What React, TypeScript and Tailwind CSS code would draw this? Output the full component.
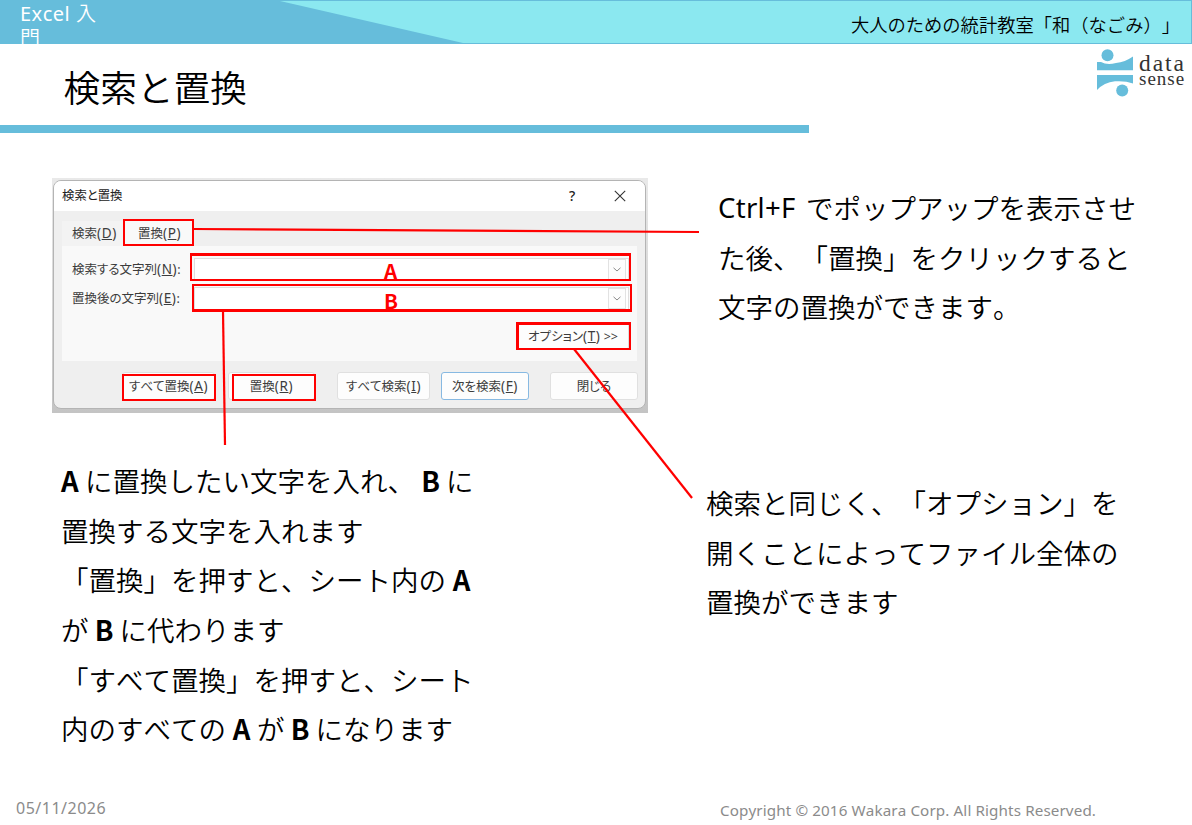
import type { ReactNode } from 'react';

const CJK = "font-['Noto_Sans_CJK_JP',sans-serif] [text-spacing-trim:space-all] [font-kerning:none]";

interface ChildrenProps {
  children: ReactNode;
  className?: string;
}

function Line({ children }: ChildrenProps) {
  return <p className="h-[49.6px] flex items-center whitespace-pre">{children}</p>;
}

function Key({ children, className = 'w-[31px] text-center' }: ChildrenProps) {
  return <b className={`inline-block font-bold ${className}`}>{children}</b>;
}

// Keyboard shortcut hint such as (D)
function Mnemonic({ letter }: { letter: string }) {
  return <span className="text-[13.5px] tracking-[0.6px]">(<u>{letter}</u>)</span>;
}

function Logo() {
  return (
    <div className="flex items-start w-[90px] h-[50px] mt-[4px]">
      <svg width="38" height="50" viewBox="0 0 38 50" fill="#66bddb">
        <circle cx="10.5" cy="7.2" r="6" />
        <path d="M0 14H4Q10 17.5 19 15Q28 14 36 8.5V22.3H0Z" />
        <path d="M0 27H36V35.5Q28 32.5 18 33.3Q7 34.5 0 42Z" />
        <circle cx="25.2" cy="42.5" r="6" />
      </svg>
      <div className="ml-1 font-['Liberation_Serif',serif] text-[#333]">
        <div className="text-[23.5px] leading-[22px] tracking-[1.9px] mt-[4px]">data</div>
        <div className="text-[19px] leading-[14px] tracking-[1px] -mt-[2px]">sense</div>
      </div>
    </div>
  );
}

function DialogButton({ children, className = '' }: ChildrenProps) {
  return (
    <div className={`h-[28px] shrink-0 flex items-center justify-center rounded-[3px] border bg-[#fdfdfd] whitespace-pre ${className}`}>
      <span>{children}</span>
    </div>
  );
}

function ComboBox() {
  return (
    <div className="w-[435px] h-[23px] flex justify-end items-center bg-white border border-[#dedede] pr-[2px]">
      <div className="w-[18px] h-[21px] flex items-center justify-center border border-[#e2e2e2] bg-[#fdfdfd]">
        <svg width="8" height="5" viewBox="0 0 8 5" fill="none" stroke="#8a8a8a">
          <path d="M0.5 0.8L4 4L7.5 0.8" />
        </svg>
      </div>
    </div>
  );
}

function ReplaceDialog() {
  return (
    <div className="w-[596px] h-[235px] p-[2px] pl-px bg-linear-to-b from-[#e9e9e9] to-[#c4c4c4] font-['Noto_Sans','Noto_Sans_CJK_JP',sans-serif] font-normal text-[12.5px] leading-none text-[#3c3c3c] [font-feature-settings:'palt']">
      <div className="w-[593px] h-[229px] rounded-[8px] border border-[#b4b4b4] bg-[#efefef] overflow-hidden">
        <div className="h-[30px] flex items-center bg-white pl-2 text-[#222]">
          <span className="w-[507px] text-[12.4px]">検索と置換</span>
          <span className="w-[45px] text-[14px] font-medium">?</span>
          <svg width="12" height="12" viewBox="0 0 12 12" stroke="#333" strokeWidth="1.1">
            <path d="M0.8 0.8L11.2 11.2M11.2 0.8L0.8 11.2" />
          </svg>
        </div>
        <div className="ml-[8px] mt-[10px] flex h-[25px] items-center">
          <div className="w-[62px] h-full flex items-center bg-[#f3f3f3] pl-[10px]">
            <span>検索<Mnemonic letter="D" /></span>
          </div>
          <div className="w-[70px] h-full flex items-center bg-[#f9f9f9] pl-[14px]">
            <span>置換<Mnemonic letter="P" /></span>
          </div>
        </div>
        <div className="ml-[8px] w-[575px] h-[115px] bg-[#f9f9f9] pt-[12px] pl-[10px]">
          <div className="flex items-center h-[23px]">
            <span className="w-[122px] whitespace-nowrap">検索する文字列<Mnemonic letter="N" />:</span>
            <ComboBox />
          </div>
          <div className="mt-[6px] flex items-center h-[23px]">
            <span className="w-[122px] whitespace-nowrap">置換後の文字列<Mnemonic letter="E" />:</span>
            <ComboBox />
          </div>
          <DialogButton className="mt-[12px] ml-[445px] w-[112px] pt-[2px] border-[#dddddd]">
            オプション<Mnemonic letter="T" /> &gt;&gt;
          </DialogButton>
        </div>
        <div className="mt-[11px] ml-[68px] flex">
          <DialogButton className="w-[93px] pt-[2px] border-[#e0e0e0]">すべて置換<Mnemonic letter="A" /></DialogButton>
          <DialogButton className="ml-[13px] w-[87px] pt-[2px] border-[#e0e0e0]">置換<Mnemonic letter="R" /></DialogButton>
          <DialogButton className="ml-[22px] w-[93px] pt-[2px] border-[#e0e0e0]">すべて検索<Mnemonic letter="I" /></DialogButton>
          <DialogButton className="ml-[11px] w-[88px] pt-[2px] border-[#87b9e2]">次を検索<Mnemonic letter="F" /></DialogButton>
          <DialogButton className="ml-[21px] w-[88px] pt-[2px] border-[#e0e0e0]">閉じる</DialogButton>
        </div>
      </div>
    </div>
  );
}

// Red callouts drawn over the dialog
function Annotations() {
  return (
    <>
      <div className="absolute left-[123px] top-[219px] w-[71px] h-[27px] border-2 border-[#ff0000]" />
      <div className="absolute left-[190px] top-[253px] w-[441px] h-[28px] border-2 border-t-[3px] border-[#ff0000]" />
      <div className="absolute left-[192px] top-[284px] w-[440px] h-[28px] border-2 border-b-[3px] border-[#ff0000]" />
      <div className="absolute left-[516px] top-[322px] w-[115px] h-[28px] border-2 border-t-[3px] border-l-[3px] border-[#ff0000]" />
      <div className="absolute left-[122px] top-[374px] w-[94px] h-[27px] border-2 border-[#ff0000]" />
      <div className="absolute left-[232px] top-[374px] w-[84px] h-[27px] border-2 border-[#ff0000]" />
      <span className="absolute left-[384px] top-[260px] text-[20.5px] leading-5 font-bold text-[#ff0000]">A</span>
      <span className="absolute left-[384px] top-[290px] text-[20.5px] leading-5 font-bold text-[#ff0000]">B</span>
      <svg className="absolute left-0 top-0" width="1192" height="825" stroke="#ff0000" strokeWidth="2.2">
        <line x1="194" y1="229" x2="699" y2="232" />
        <line x1="223" y1="311" x2="225" y2="445" />
        <line x1="574" y1="349" x2="692" y2="498" />
      </svg>
    </>
  );
}

export default function App() {
  return (
    <div className={`relative w-[1192px] h-[825px] overflow-hidden bg-white text-black font-[350] flex flex-col ${CJK}`}>
      <header className="relative h-[44px] shrink-0 overflow-hidden bg-[#66bddb] flex justify-between">
        <svg className="absolute left-0 top-0" width="1192" height="44">
          <path d="M280 1H1191V43H463Z" fill="#8be8f0" />
        </svg>
        <div className="relative ml-[20px] mt-px w-[90px] font-['Noto_Sans','Noto_Sans_CJK_JP',sans-serif] text-[20px] leading-[25px] text-white">
          <span className="font-normal tracking-[0.5px]">Excel </span>入<br />門
        </div>
        <div className="relative mr-[12px] mt-[12px] text-[18.3px] leading-6 whitespace-nowrap">
          大人のための統計教室「和（なごみ）」
        </div>
      </header>

      <div className="h-[81px] shrink-0 flex justify-between pl-[63.5px] pr-[5px]">
        <h1 className="mt-[17px] text-[36.7px] leading-[50px]">検索と置換</h1>
        <Logo />
      </div>
      <div className="w-[809px] h-[8px] shrink-0 bg-[#66bddb]" />

      <main className="flex h-[646px] shrink-0 text-[27.5px]">
        <section className="w-[654px] pl-[52px] pt-[45px]">
          <ReplaceDialog />
          <div className="mt-[43px] ml-[9px]">
            <Line><Key className="w-[24px] text-left">A</Key>に置換したい文字を入れ、<Key>B</Key>に</Line>
            <Line>置換する文字を入れます</Line>
            <Line>「置換」を押すと、シート内の<Key>A</Key></Line>
            <Line>が<Key>B</Key>に代わります</Line>
            <Line>「すべて置換」を押すと、シート</Line>
            <Line>内のすべての<Key>A</Key>が<Key>B</Key>になります</Line>
          </div>
        </section>
        <section className="pt-[50px] pl-[52px]">
          <div className="ml-[12px]">
            <Line><span className="inline-block w-[88px] font-['Noto_Sans',sans-serif] font-normal leading-none tracking-[0.3px]">Ctrl+F</span>でポップアップを表示させ</Line>
            <Line>た後、「置換」をクリックすると</Line>
            <Line>文字の置換ができます。</Line>
          </div>
          <div className="mt-[146px]">
            <Line>検索と同じく、「オプション」を</Line>
            <Line>開くことによってファイル全体の</Line>
            <Line>置換ができます</Line>
          </div>
        </section>
      </main>

      <footer className="flex pl-[16px] pt-[17px] font-['Noto_Sans',sans-serif] font-normal text-[15.2px] leading-6 text-[#8b8b8b]">
        <span className="w-[704px] text-[16px] tracking-[0.5px]">05/11/2026</span>
        <span className="mt-[2px] whitespace-nowrap tracking-[0.12px]">Copyright © 2016 Wakara Corp. All Rights Reserved.</span>
      </footer>

      <Annotations />
    </div>
  );
}
